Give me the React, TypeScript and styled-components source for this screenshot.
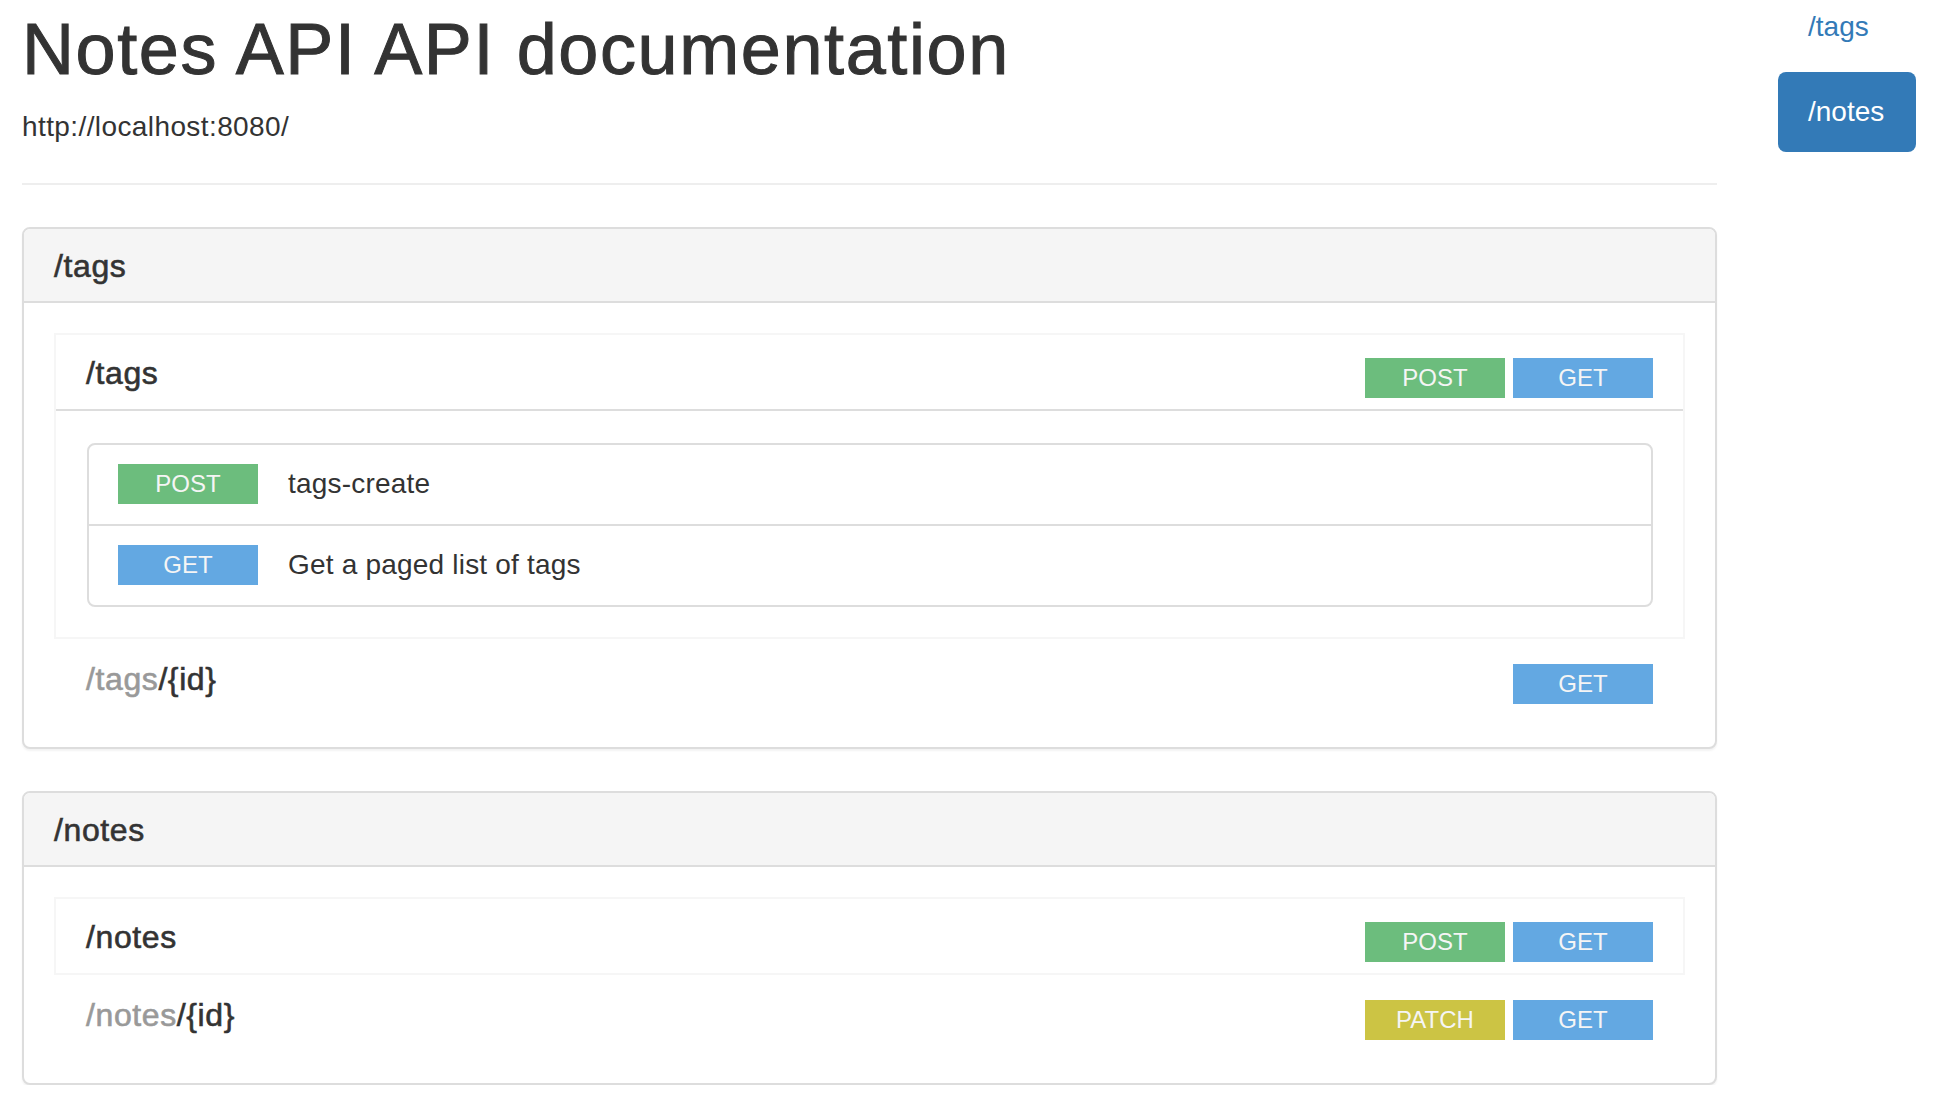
import React from 'react';
import styled, {createGlobalStyle} from 'styled-components';

// method badge colours
const METHOD_COLORS: Record<string, string> = {
    GET: '#63a8e2',
    POST: '#6cbd7d',
    PATCH: '#ccc444',
    PUT: '#22bac4',
    DELETE: '#d26460'
};

type MethodItem = { method: string; description: string };

type Resource = {
    parent?: string;
    path: string;
    methods: string[];
    bordered?: boolean;
    items?: MethodItem[];
};

type Section = { name: string; resources: Resource[] };

const sections: Section[] = [
    {
        name: '/tags',
        resources: [
            {
                path: '/tags',
                methods: ['POST', 'GET'],
                bordered: true,
                items: [
                    {method: 'POST', description: 'tags-create'},
                    {method: 'GET', description: 'Get a paged list of tags'}
                ]
            },
            {parent: '/tags', path: '/{id}', methods: ['GET']}
        ]
    },
    {
        name: '/notes',
        resources: [
            {path: '/notes', methods: ['POST', 'GET'], bordered: true},
            {parent: '/notes', path: '/{id}', methods: ['PATCH', 'GET']}
        ]
    }
];

const App: React.FC = () => {
    return (
        <>
            <GlobalStyle/>
            <Page>
                <Main>
                    <Title>Notes API API documentation</Title>
                    <BaseUri>http://localhost:8080/</BaseUri>
                    <Rule/>

                    <Panels>
                        {sections.map((section) => (
                            <Panel key={section.name}>
                                <PanelHeading>
                                    <PanelTitle>{section.name}</PanelTitle>
                                </PanelHeading>
                                <PanelBody>
                                    {section.resources.map((res) => (
                                        <ResourceBox key={(res.parent ?? '') + res.path} bordered={!!res.bordered}>
                                            <ResourceHeading expanded={!!res.items}>
                                                <ResourceTitle>
                                                    {res.parent && <ParentPath>{res.parent}</ParentPath>}
                                                    {res.path}
                                                </ResourceTitle>
                                                <MethodGroup>
                                                    {res.methods.map((m) => (
                                                        <Badge key={m} method={m}>{m}</Badge>
                                                    ))}
                                                </MethodGroup>
                                            </ResourceHeading>

                                            {res.items && (
                                                <ResourceBody>
                                                    <MethodList>
                                                        {res.items.map((item) => (
                                                            <MethodRow key={item.method}>
                                                                <Badge method={item.method}>{item.method}</Badge>
                                                                <MethodDesc>{item.description}</MethodDesc>
                                                            </MethodRow>
                                                        ))}
                                                    </MethodList>
                                                </ResourceBody>
                                            )}
                                        </ResourceBox>
                                    ))}
                                </PanelBody>
                            </Panel>
                        ))}
                    </Panels>
                </Main>

                <Sidebar>
                    <Pill href="#tags" active={false}>/tags</Pill>
                    <Pill href="#notes" active>/notes</Pill>
                </Sidebar>
            </Page>
        </>
    );
};

export default App;

// styled-components

const GlobalStyle = createGlobalStyle `
  html, body {
    margin: 0;
    padding: 0;
    background: #fff;
  }
  body {
    font-family: "Liberation Sans", Arial, Helvetica, sans-serif;
    color: #333;
  }
`;

const Page = styled.div `
  display: flex;
  align-items: flex-start;
  gap: 61px;
  padding: 10px 28px 0 22px;
`;

const Main = styled.div `
  flex: 1;
  min-width: 0;
`;

const Title = styled.h1 `
  margin: 0;
  font-size: 72px;
  line-height: 79px;
  font-weight: 400;
  letter-spacing: 1.6px;
  -webkit-text-stroke: 1px #333;
  color: #333;
`;

const BaseUri = styled.p `
  margin: 18px 0 0;
  font-size: 28px;
  line-height: 40px;
  letter-spacing: 0.4px;
`;

const Rule = styled.hr `
  margin: 36px 0 0;
  height: 0;
  border: none;
  border-top: 2px solid #eee;
`;

const Panels = styled.div `
  margin-top: 42px;
  display: flex;
  flex-direction: column;
  gap: 42px;
`;

const Panel = styled.section `
  border: 2px solid #ddd;
  border-radius: 8px;
  background: #fff;
  box-shadow: 0 2px 2px rgba(0, 0, 0, 0.05);
`;

const PanelHeading = styled.div `
  padding: 20px 30px 17px;
  background: #f5f5f5;
  border-bottom: 2px solid #ddd;
  border-radius: 6px 6px 0 0;
`;

const PanelTitle = styled.h4 `
  margin: 0;
  font-size: 32px;
  line-height: 35px;
  font-weight: 400;
  letter-spacing: 0.6px;
  -webkit-text-stroke: 0.6px #333;
  color: #333;
`;

const PanelBody = styled.div `
  padding: 30px;
`;

const ResourceBox = styled.div < {
    bordered: boolean
} > `
  border: 2px solid ${ (props) => (props.bordered ? '#f6f6f6' : 'transparent')};
  background: #fff;
`;

const ResourceHeading = styled.div < {
    expanded: boolean
} > `
  display: flex;
  justify-content: space-between;
  align-items: flex-start;
  padding: 21px 30px 11px;
  border-bottom: ${ (props) => (props.expanded ? '2px solid #ddd' : 'none')};
`;

const ResourceTitle = styled.h4 `
  margin: 0;
  font-size: 32px;
  line-height: 35px;
  font-weight: 400;
  letter-spacing: 0.6px;
  -webkit-text-stroke: 0.6px currentColor;
  color: #333;
`;

const ParentPath = styled.span `
  color: #999;
`;

const MethodGroup = styled.div `
  display: flex;
  gap: 8px;
  margin-top: 2px;
`;

const Badge = styled.span < {
    method: string
} > `
  display: flex;
  align-items: center;
  justify-content: center;
  flex-shrink: 0;
  width: 140px;
  height: 40px;
  font-size: 24px;
  color: #f5f5f5;
  background-color: ${ (props) => METHOD_COLORS[props.method] ?? '#999'};
`;

const ResourceBody = styled.div `
  padding: 32px 30px 30px 31px;
`;

const MethodList = styled.div `
  border: 2px solid #ddd;
  border-radius: 8px;
`;

const MethodRow = styled.div `
  display: flex;
  align-items: center;
  gap: 30px;
  padding: 19px 30px 20px 29px;

  & + & {
    border-top: 2px solid #ddd;
  }
`;

const MethodDesc = styled.span `
  font-size: 28px;
  line-height: 40px;
  letter-spacing: 0.2px;
  color: #333;
`;

const Sidebar = styled.nav `
  width: 138px;
  flex-shrink: 0;
  margin-top: -23px;
  display: flex;
  flex-direction: column;
  gap: 5px;
`;

const Pill = styled.a < {
    active: boolean
} > `
  display: block;
  padding: 20px 30px;
  font-size: 28px;
  line-height: 40px;
  border-radius: 8px;
  text-decoration: none;
  color: ${ (props) => (props.active ? '#fff' : '#337ab7')};
  background: ${ (props) => (props.active ? '#337ab7' : 'transparent')};
`;
